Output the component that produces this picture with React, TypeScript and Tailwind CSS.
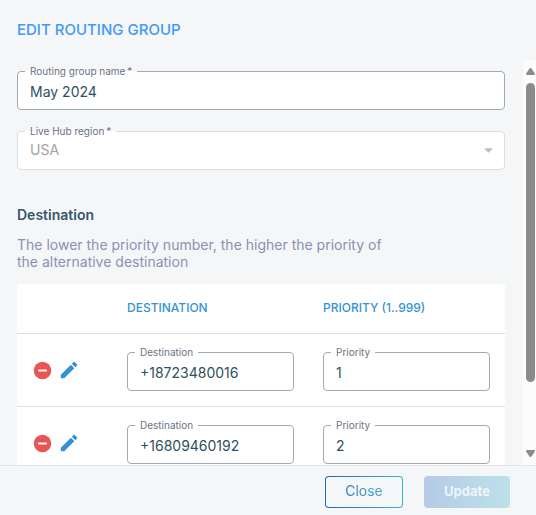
import { useState } from 'react';
import type { ReactNode } from 'react';
import clsx from 'clsx';

interface Destination {
    id: number;
    number: string;
    priority: string;
}

const initialDestinations: Destination[] = [
    { id: 1, number: '+18723480016', priority: '1' },
    { id: 2, number: '+16809460192', priority: '2' },
];

interface OutlinedProps {
    id: string;
    label: string;
    required?: boolean;
    disabled?: boolean;
    children: ReactNode;
}

// The legend cuts the notch into the border
function Outlined({ id, label, required, disabled, children }: OutlinedProps) {
    return (
        <fieldset
            className={clsx(
                'min-w-0 rounded border bg-white',
                disabled ? 'border-[#dcdde1]' : 'border-[#a3a8b5]'
            )}
        >
            <legend className="ml-[7px] px-[5px] text-[10px] leading-4 text-[#6b7285]">
                <label htmlFor={id}>
                    {label}
                    {required && <span aria-hidden="true">&thinsp;*</span>}
                </label>
            </legend>
            {children}
        </fieldset>
    );
}

interface TextFieldProps {
    id: string;
    label: string;
    value: string;
    required?: boolean;
    onChange: (value: string) => void;
}

function TextField({ id, label, value, required, onChange }: TextFieldProps) {
    return (
        <Outlined id={id} label={label} required={required}>
            <input
                id={id}
                type="text"
                value={value}
                required={required}
                onChange={(e) => onChange(e.target.value)}
                className="block h-[30px] w-full bg-transparent px-3 pb-1.5 text-sm text-[#2f4f60] outline-none"
            />
        </Outlined>
    );
}

function Scrollbar() {
    return (
        <div className="flex w-[13px] shrink-0 flex-col items-center bg-[#fcfcfc] py-2 pl-0.5" aria-hidden="true">
            <svg className="h-[7px] w-[9px] shrink-0" viewBox="0 0 9 7" fill="#8b8b8b">
                <path d="M4.5 0C5 0 5.4.2 5.7.7L8.8 5.5C9.2 6.3 8.9 7 8 7H1C.1 7-.2 6.3.2 5.5L3.3.7C3.6.2 4 0 4.5 0Z" />
            </svg>
            <div className="mt-2 flex w-[9px] flex-1 flex-col">
                <div className="grow-[22] rounded-full bg-[#8b8b8b]" />
                <div className="grow-[5]" />
            </div>
            <svg className="h-[7px] w-[9px] shrink-0" viewBox="0 0 9 7" fill="#8b8b8b">
                <path d="M4.5 7C4 7 3.6 6.8 3.3 6.3L.2 1.5C-.2.7.1 0 1 0H8C8.9 0 9.2.7 8.8 1.5L5.7 6.3C5.4 6.8 5 7 4.5 7Z" />
            </svg>
        </div>
    );
}

export default function App() {
    const [name, setName] = useState('May 2024');
    const [destinations, setDestinations] = useState(initialDestinations);

    const update = (id: number, patch: Partial<Destination>) =>
        setDestinations((rows) => rows.map((row) => (row.id === id ? { ...row, ...patch } : row)));

    const remove = (id: number) => setDestinations((rows) => rows.filter((row) => row.id !== id));

    return (
        <div className="flex h-screen flex-col bg-[#f5f6f8] font-['Inter',sans-serif]">
            {/* Header */}
            <header className="flex h-[60px] shrink-0 items-center px-[17px]">
                <h1 className="text-[15px] font-medium text-[#4499f7]">EDIT ROUTING GROUP</h1>
            </header>

            {/* Content */}
            <div className="flex min-h-0 flex-1">
                <main className="min-w-0 flex-1 overflow-hidden pt-[3px] pr-[18px] pl-[17px]">
                    <div className="flex flex-col gap-[13px]">
                        <TextField id="group-name" label="Routing group name" value={name} required onChange={setName} />
                        <Outlined id="region" label="Live Hub region" required disabled>
                            <div className="flex h-[30px] items-center pr-[11px] pb-2">
                                <select
                                    id="region"
                                    disabled
                                    className="min-w-0 flex-1 appearance-none bg-transparent px-3 text-sm text-[#a2a2a4] opacity-100"
                                >
                                    <option>USA</option>
                                </select>
                                <svg className="h-[5px] w-[9px] shrink-0" viewBox="0 0 10 5" fill="#bdbdbd" aria-hidden="true">
                                    <path d="M0 0h10L5 5z" />
                                </svg>
                            </div>
                        </Outlined>
                    </div>

                    <h2 className="mt-[35px] text-sm leading-5 font-semibold text-[#34566a]">Destination</h2>
                    <p className="mt-[11px] max-w-[380px] text-sm leading-[17px] text-[#8a92b2]">
                        The lower the priority number, the higher the priority of the alternative destination
                    </p>

                    <table className="mt-3.5 w-full table-fixed border-separate border-spacing-0 bg-white text-left">
                        <thead>
                            <tr className="h-[50px] text-xs text-[#3792cf]">
                                <td className="w-[110px] border-b border-[#dedfe1]" />
                                <th className="w-[196px] border-b border-[#dedfe1] pb-0.5 font-medium">DESTINATION</th>
                                <th className="border-b border-[#dedfe1] pb-0.5 font-medium">PRIORITY (1..999)</th>
                            </tr>
                        </thead>
                        <tbody>
                            {destinations.map((row) => (
                                <tr key={row.id}>
                                    <td className="border-b border-[#dedfe1] pl-4">
                                        <div className="flex items-center gap-[7px]">
                                            <button type="button" aria-label="Remove destination" onClick={() => remove(row.id)}>
                                                <svg className="size-[19px]" viewBox="0 0 24 24" aria-hidden="true">
                                                    <circle cx="12" cy="12" r="11" fill="#e95455" />
                                                    <path d="M6.5 10.8h11v2.4h-11z" fill="#fff" />
                                                </svg>
                                            </button>
                                            <button type="button" aria-label="Edit destination">
                                                <svg className="size-5" viewBox="1 1 22 22" fill="#3391d3" aria-hidden="true">
                                                    <path d="M3 17.25V21h3.75L17.81 9.94l-3.75-3.75L3 17.25zM20.71 7.04a1 1 0 0 0 0-1.41l-2.34-2.34a1 1 0 0 0-1.41 0l-1.83 1.83 3.75 3.75 1.83-1.83z" />
                                                </svg>
                                            </button>
                                        </div>
                                    </td>
                                    <td className="border-b border-[#dedfe1] pt-2.5 pr-[29px] pb-[15px]">
                                        <TextField
                                            id={`destination-${row.id}`}
                                            label="Destination"
                                            value={row.number}
                                            onChange={(number) => update(row.id, { number })}
                                        />
                                    </td>
                                    <td className="border-b border-[#dedfe1] pt-2.5 pr-[15px] pb-[15px]">
                                        <TextField
                                            id={`priority-${row.id}`}
                                            label="Priority"
                                            value={row.priority}
                                            onChange={(priority) => update(row.id, { priority })}
                                        />
                                    </td>
                                </tr>
                            ))}
                        </tbody>
                    </table>
                </main>
                <Scrollbar />
            </div>

            {/* Actions */}
            <footer className="flex h-[50px] shrink-0 items-center justify-end gap-[21px] border-t border-[#e4e5e8] pt-0.5 pr-[26px]">
                <button
                    type="button"
                    className="h-8 w-[78px] rounded border border-transparent pb-0.5 text-sm [background:linear-gradient(#f5f6f8,#f5f6f8)_padding-box,linear-gradient(90deg,#1f6bb0,#3fb2cb)_border-box]"
                >
                    <span className="bg-gradient-to-r from-[#2f79b8] to-[#45abcc] bg-clip-text text-transparent">Close</span>
                </button>
                <button
                    type="button"
                    disabled
                    className="h-8 w-[86px] rounded bg-gradient-to-r from-[#b5cae5] to-[#bce1ea] text-[13px] font-bold text-[#eef5fa]"
                >
                    Update
                </button>
            </footer>
        </div>
    );
}
